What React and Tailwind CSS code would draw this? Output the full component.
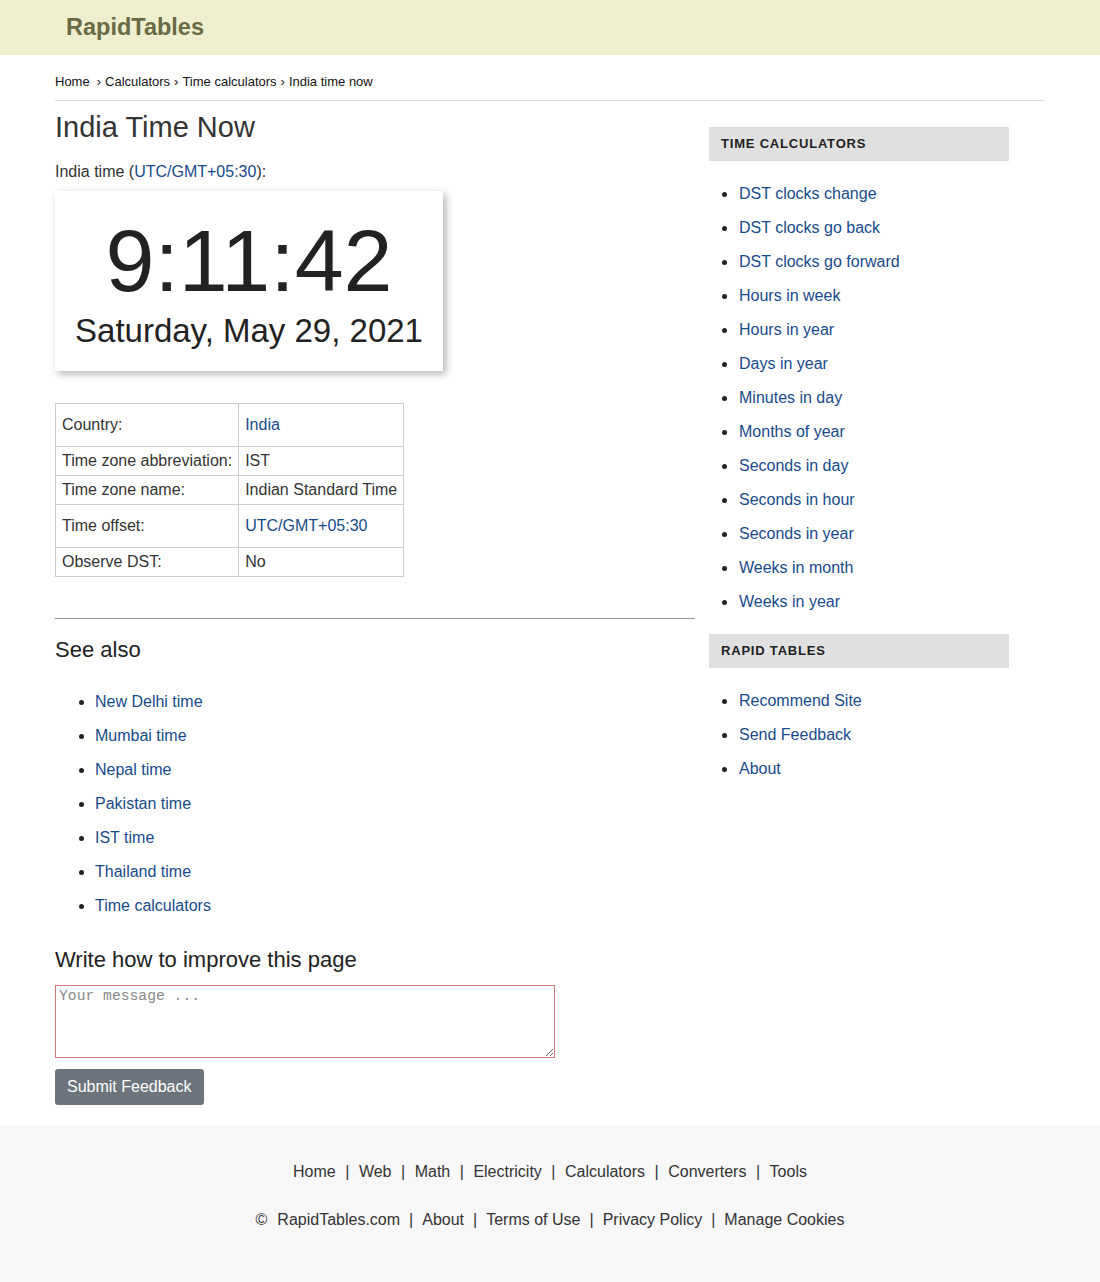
export default function App() {
  const link = "text-[#174a8b]";
  const seeAlso = ["New Delhi time", "Mumbai time", "Nepal time", "Pakistan time", "IST time", "Thailand time", "Time calculators"];
  const timeCalcs = ["DST clocks change", "DST clocks go back", "DST clocks go forward", "Hours in week", "Hours in year", "Days in year", "Minutes in day", "Months of year", "Seconds in day", "Seconds in hour", "Seconds in year", "Weeks in month", "Weeks in year"];
  const rapid = ["Recommend Site", "Send Feedback", "About"];
  const rows = [
    ["Country:", "India", "h-[43px]", true],
    ["Time zone abbreviation:", "IST", "h-[29px]", false],
    ["Time zone name:", "Indian Standard Time", "h-[29px]", false],
    ["Time offset:", "UTC/GMT+05:30", "h-[43px]", true],
    ["Observe DST:", "No", "h-[29px]", false],
  ];
  const Li = ({ children, side }) => (
    <li className="flex items-center h-[34px]">
      <span className={`w-[5px] h-[5px] rounded-full bg-[#222] ${side ? "ml-[13px] mr-[12px]" : "ml-[24px] mr-[11px]"}`} />
      <a className={link}>{children}</a>
    </li>
  );
  return (
    <div className="min-h-[1282px] bg-white flex flex-col text-[#333] font-['Liberation_Sans',Arial,sans-serif] text-[16px]">
      <header className="h-[55px] bg-[#efefcf] flex items-center pl-[66px]">
        <span className="text-[23.5px] font-bold text-[#6a6a44]">RapidTables</span>
      </header>
      <div className="px-[55px]">
        <div className="h-[46px] flex items-center text-[13px] text-[#111] pt-[8px] border-b border-[#ddd] w-[990px]">
          <span>Home</span>
          <span className="mx-[4px] ml-[7px]">›</span>
          <span>Calculators</span>
          <span className="mx-[4px]">›</span>
          <span>Time calculators</span>
          <span className="mx-[4px]">›</span>
          <span>India time now</span>
        </div>
        <div className="flex">
          <main className="w-[640px]">
            <h1 className="text-[29px] leading-[32px] mt-[10px] text-[#333]">India Time Now</h1>
            <p className="mt-[19px] leading-[20px]">
              India time (<a className={link}>UTC/GMT+05:30</a>):
            </p>
            <div className="mt-[9px] w-[388px] h-[180px] bg-white shadow-[3px_3px_8px_rgba(0,0,0,0.3)] flex flex-col items-center">
              <div className="text-[88px] leading-[88px] mt-[26px] text-[#222]">9:11:42</div>
              <div className="text-[33px] leading-[36px] mt-[8px] text-[#222]">Saturday, May 29, 2021</div>
            </div>
            <table className="mt-[32px] border-collapse whitespace-nowrap">
              <tbody>
                {rows.map(([k, v, h, isLink]) => (
                  <tr key={k} className={h}>
                    <td className="border border-[#ccc] px-[6px] w-[180px] py-0">{k}</td>
                    <td className="border border-[#ccc] px-[6px] w-[165px] py-0">
                      {isLink ? <a className={link}>{v}</a> : v}
                    </td>
                  </tr>
                ))}
              </tbody>
            </table>
            <div className="mt-[41px] border-t border-[#999] w-[640px]" />
            <h2 className="text-[22px] mt-[18px] leading-[26px] text-[#222]">See also</h2>
            <ul className="mt-[22px]">
              {seeAlso.map((s) => (
                <Li key={s}>{s}</Li>
              ))}
            </ul>
            <h2 className="text-[22px] mt-[24px] leading-[26px] text-[#222]">Write how to improve this page</h2>
            <textarea
              placeholder="Your message ..."
              className="block mt-[12px] w-[500px] h-[73px] border border-[#d07a7a] px-[3px] py-[1px] font-['Liberation_Mono',monospace] text-[14.7px] leading-[18px] placeholder:text-[#888]"
            />
            <button className="mt-[11px] h-[36px] px-[12px] bg-[#6c757d] text-white rounded-[3px] text-[16px]">Submit Feedback</button>
          </main>
          <aside className="ml-[14px] w-[300px] pt-[26px]">
            <div className="h-[34px] bg-[#e0e0e0] flex items-center pl-[12px] text-[13px] font-bold tracking-[0.8px] text-[#222]">TIME CALCULATORS</div>
            <ul className="mt-[16px]">
              {timeCalcs.map((s) => (
                <Li key={s} side>{s}</Li>
              ))}
            </ul>
            <div className="mt-[15px] h-[34px] bg-[#e0e0e0] flex items-center pl-[12px] text-[13px] font-bold tracking-[0.8px] text-[#222]">RAPID TABLES</div>
            <ul className="mt-[16px]">
              {rapid.map((s) => (
                <Li key={s} side>{s}</Li>
              ))}
            </ul>
          </aside>
        </div>
      </div>
      <footer className="mt-[20px] flex-1 bg-[#f7f7f7] pt-[37px] pb-[46px] flex flex-col items-center text-[#333]">
        <div className="h-[20px] flex items-center">
          {["Home", "Web", "Math", "Electricity", "Calculators", "Converters", "Tools"].map((s, i) => (
            <span key={s}>
              {i > 0 && <span className="mx-[9.5px]">|</span>}
              {s}
            </span>
          ))}
        </div>
        <div className="mt-[28px] h-[20px] flex items-center">
          <span className="mr-[10px]">©</span>
          {["RapidTables.com", "About", "Terms of Use", "Privacy Policy", "Manage Cookies"].map((s, i) => (
            <span key={s}>
              {i > 0 && <span className="mx-[9px]">|</span>}
              {s}
            </span>
          ))}
        </div>
      </footer>
    </div>
  );
}
